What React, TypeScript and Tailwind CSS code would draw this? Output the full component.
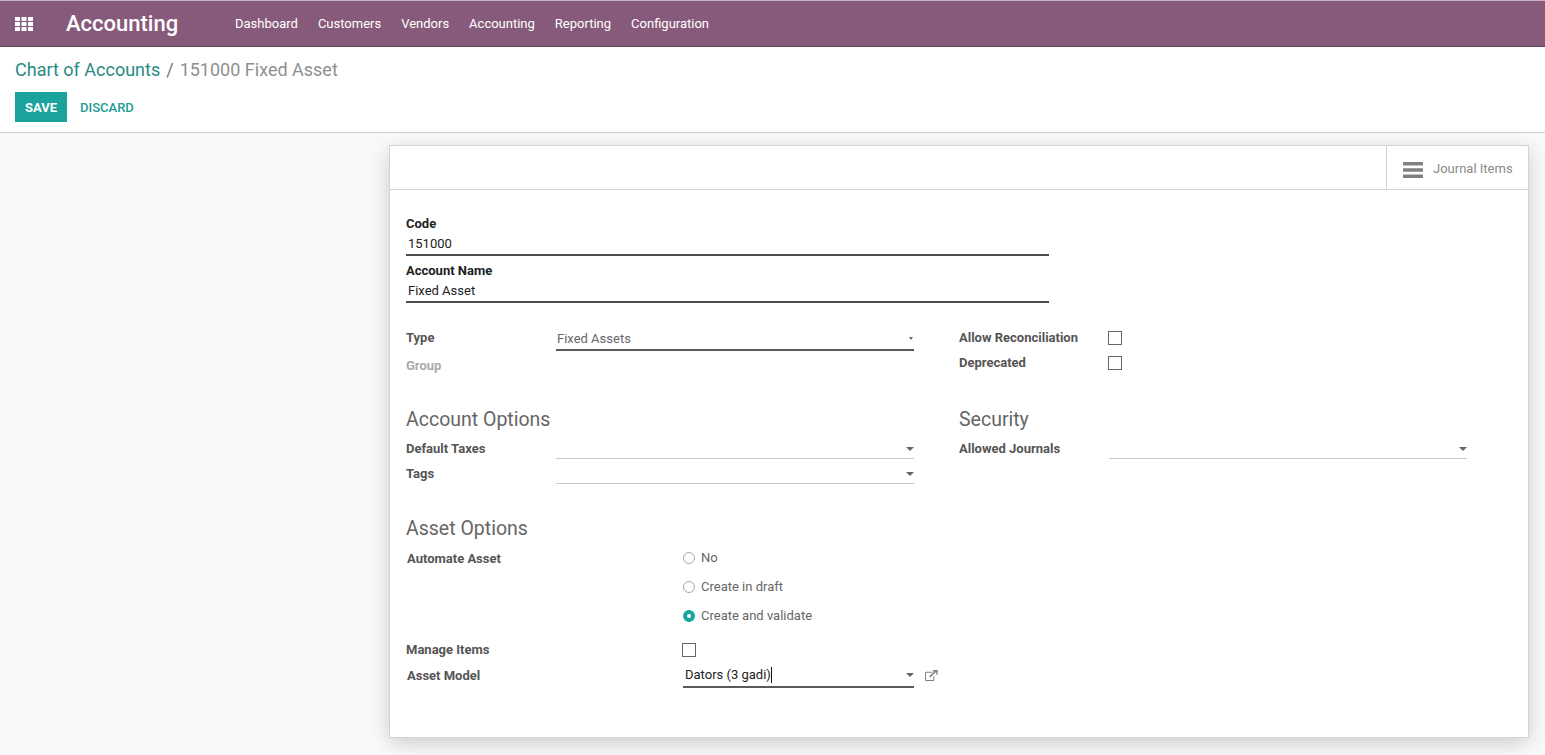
const menu = ["Dashboard", "Customers", "Vendors", "Accounting", "Reporting", "Configuration"];

const Caret = () => <span className="w-0 h-0 border-x-[4px] border-x-transparent border-t-[4px] border-t-[#666]" />;

const Checkbox = () => <span className="block w-[14px] h-[14px] border-[1.5px] border-[#666] bg-white" />;

const Radio = ({ label, checked = false }: { label: string; checked?: boolean }) => (
  <div className="h-[29px] flex items-center gap-[6px] text-[13px] text-[#666]">
    {checked ? (
      <span className="w-3 h-3 rounded-full bg-white border-[4px] border-[#1aa39c]" />
    ) : (
      <span className="w-3 h-3 rounded-full border border-[#a8a8a8]" />
    )}
    {label}
  </div>
);

const Label = ({
  children,
  className = "",
  color = "text-[#555]",
}: {
  children: React.ReactNode;
  className?: string;
  color?: string;
}) => <div className={`text-[13px] font-bold ${color} ${className}`}>{children}</div>;

const SelectLine = () => (
  <div className="h-[25px] w-[358px] border-b border-[#c8c8c8] flex items-end justify-end pb-[7px]">
    <Caret />
  </div>
);

export default function App() {
  return (
    <div className="h-[755px] overflow-hidden bg-[#f9f9fb] font-['Roboto',sans-serif] text-[13px] text-[#4c4c4c]">
      <header className="h-[47px] bg-[#875a7b] border-t border-[#c9b3c3] border-b border-b-[#5f4057] flex items-center text-white">
        <svg className="ml-[15px] w-[18px] h-[14px] fill-white" viewBox="0 0 18 14">
          <rect x="0" y="0" width="5" height="4" />
          <rect x="6.5" y="0" width="5" height="4" />
          <rect x="13" y="0" width="5" height="4" />
          <rect x="0" y="5" width="5" height="4" />
          <rect x="6.5" y="5" width="5" height="4" />
          <rect x="13" y="5" width="5" height="4" />
          <rect x="0" y="10" width="5" height="4" />
          <rect x="6.5" y="10" width="5" height="4" />
          <rect x="13" y="10" width="5" height="4" />
        </svg>
        <span className="ml-[33px] w-[169px] text-[22px] font-medium -mt-[1px]">Accounting</span>
        <nav className="flex gap-[20px] text-[13px]">
          {menu.map((m) => (
            <span key={m}>{m}</span>
          ))}
        </nav>
      </header>

      <div className="h-[86px] bg-white border-b border-[#cfcfcf] pl-[15px] pt-[10px]">
        <div className="text-[18px] leading-[26px] flex gap-[6px]">
          <span className="text-[#2a8a84]">Chart of Accounts</span>
          <span className="text-[#777]">/</span>
          <span className="text-[#8f8f8f]">151000 Fixed Asset</span>
        </div>
        <div className="mt-[9px] flex items-center">
          <span className="h-[30px] w-[52px] pt-[1px] bg-[#1aa39c] text-white text-[13px] font-bold flex items-center justify-center">
            SAVE
          </span>
          <span className="ml-[13px] pt-[1px] text-[13px] font-medium text-[#1d9c95]">DISCARD</span>
        </div>
      </div>

      <main className="mt-[12px] ml-[389px] w-[1140px] h-[593px] bg-white border border-[#d4d4d4] shadow-[0_5px_20px_-1px_rgba(0,0,0,0.2)]">
        <div className="h-[44px] border-b border-[#d4d4d4] flex justify-end">
          <div className="w-[142px] border-l border-[#d4d4d4] flex items-center pl-[16px] gap-[10px] text-[#8a8a8a]">
            <svg className="w-[20px] h-[16px] mt-[4px] fill-[#808080]" viewBox="0 0 20 16">
              <rect y="0" width="20" height="3.4" rx="0.5" />
              <rect y="6.3" width="20" height="3.4" rx="0.5" />
              <rect y="12.6" width="20" height="3.4" rx="0.5" />
            </svg>
            <span className="text-[13px] mt-[2px]">Journal Items</span>
          </div>
        </div>

        <div className="pl-[16px] pt-[25px]">
          <Label color="text-[#222]" className="leading-[18px]">Code</Label>
          <div className="w-[643px] h-[23px] border-b-2 border-[#4c4c4c] pl-[2px] text-[#222] leading-[21px]">151000</div>
          <Label color="text-[#222]" className="mt-[6px] leading-[18px]">Account Name</Label>
          <div className="w-[643px] h-[23px] border-b-2 border-[#4c4c4c] pl-[2px] text-[#222] leading-[21px]">Fixed Asset</div>

          <div className="mt-[24px] flex">
            <div className="w-[553px]">
              <div className="flex">
                <Label className="w-[150px] pt-[1px]">Type</Label>
                <div className="w-[358px] h-[24px] border-b-2 border-[#5a5a5a] flex items-center justify-between pt-[1px] pl-[1px] pr-[1px] text-[#666]">
                  Fixed Assets
                  <span className="w-0 h-0 border-x-[2.5px] border-x-transparent border-t-[3px] border-t-[#666]" />
                </div>
              </div>
              <Label color="text-[#aaa]" className="mt-[5px]">Group</Label>
            </div>
            <div className="-mt-[1px]">
              <div className="flex items-center h-[24px]">
                <Label className="w-[149px]">Allow Reconciliation</Label>
                <Checkbox />
              </div>
              <div className="flex items-center h-[24px] mt-[1px]">
                <Label className="w-[149px]">Deprecated</Label>
                <Checkbox />
              </div>
            </div>
          </div>

          <div className="mt-[30px] flex">
            <div className="w-[553px]">
              <h2 className="text-[19.5px] leading-[28px] text-[#666]">Account Options</h2>
              <div className="flex">
                <Label className="w-[150px] pt-[5px]">Default Taxes</Label>
                <SelectLine />
              </div>
              <div className="flex">
                <Label className="w-[150px] pt-[5px]">Tags</Label>
                <SelectLine />
              </div>
            </div>
            <div>
              <h2 className="text-[19.5px] leading-[28px] text-[#666]">Security</h2>
              <div className="flex">
                <Label className="w-[150px] pt-[5px]">Allowed Journals</Label>
                <SelectLine />
              </div>
            </div>
          </div>

          <h2 className="mt-[31px] text-[19.5px] leading-[28px] text-[#666]">Asset Options</h2>
          <div className="flex mt-[1px]">
            <Label className="w-[277px] pl-[1px] pt-[5px]">Automate Asset</Label>
            <div>
              <Radio label="No" />
              <Radio label="Create in draft" />
              <Radio label="Create and validate" checked />
            </div>
          </div>
          <div className="flex items-center h-[26px] mt-[6px]">
            <Label className="w-[276px]">Manage Items</Label>
            <span className="mt-[1px]">
              <Checkbox />
            </span>
          </div>
          <div className="flex">
            <Label className="w-[277px] pl-[1px] pt-[3px]">Asset Model</Label>
            <div className="w-[231px] h-[25px] border-b-2 border-[#5a5a5a] flex items-center justify-between pt-[1px] pl-[2px] text-[#222]">
              <span className="border-r border-[#111] leading-[16px]">Dators (3 gadi)</span>
              <Caret />
            </div>
            <svg className="ml-[11px] mt-[7px] w-[13px] h-[11px] text-[#808080]" viewBox="0 0 14 12" fill="none" stroke="currentColor">
              <path d="M8 2.5H1.5a1 1 0 0 0-1 1v7a1 1 0 0 0 1 1h7a1 1 0 0 0 1-1V7" strokeWidth="1.1" />
              <path d="M5 7.5 12 1M8.5.7H13V5" strokeWidth="1.6" />
            </svg>
          </div>
        </div>
      </main>
    </div>
  );
}
